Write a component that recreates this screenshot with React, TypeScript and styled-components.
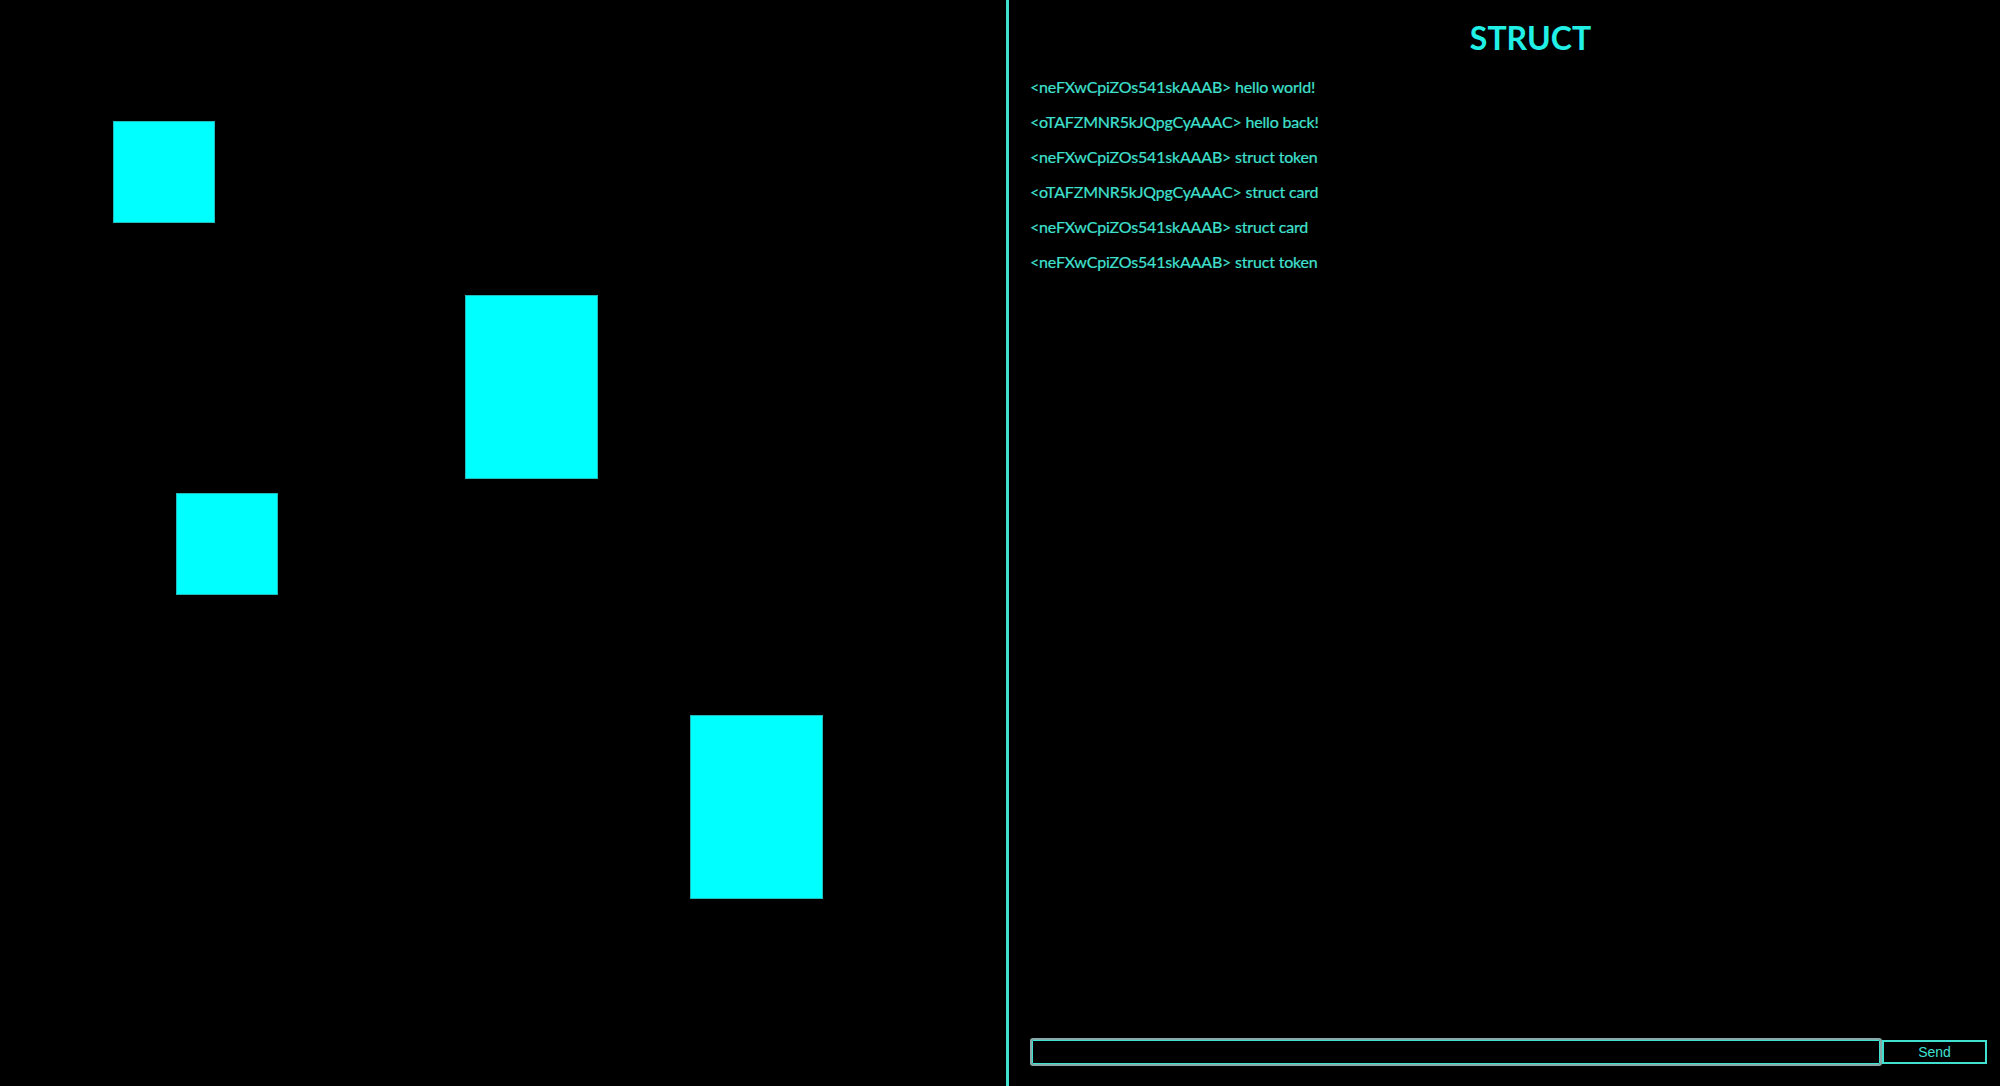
import React from "react";
import styled, { createGlobalStyle } from "styled-components";

const Global = createGlobalStyle`
  html, body { margin: 0; padding: 0; background: #000; }
  body { font-family: Lato, "Open Sans", sans-serif; }
  * { box-sizing: border-box; }
`;

const Page = styled.div`
  display: flex;
  height: 100vh;
  background: #000;
  overflow: hidden;
`;

const Board = styled.div`
  position: relative;
  flex: 0 0 1006px;
  height: 100%;
`;

const Divider = styled.div`
  flex: 0 0 3px;
  background: #40e0d0;
`;

const Piece = styled.div<{ $kind: "token" | "card" }>`
  position: absolute;
  width: ${(p) => (p.$kind === "token" ? "102px" : "133px")};
  height: ${(p) => (p.$kind === "token" ? "102px" : "184px")};
  background: #00ffff;
  border: 1px solid #20b8b8;
`;

const Chat = styled.div`
  flex: 1;
  display: flex;
  flex-direction: column;
  padding: 0 13px 20px 21px;
  min-width: 0;
`;

const Title = styled.h1`
  margin: 19px 0 20px;
  padding-left: 44px;
  text-align: center;
  font-family: Lato, "Open Sans", sans-serif;
  font-size: 32px;
  font-weight: 700;
  color: #20f0e6;
  line-height: 38px;
`;

const Log = styled.div`
  flex: 1;
  display: flex;
  flex-direction: column;
`;

const Line = styled.p`
  margin: 0 0 16px;
  font-size: 16px;
  line-height: 19px;
  letter-spacing: -0.18px;
  color: #40e0d0;
  -webkit-text-stroke: 0.2px #40e0d0;
`;

const Composer = styled.form`
  display: flex;
  align-items: center;
  height: 28px;
`;

const Field = styled.input`
  flex: 1;
  height: 28px;
  background: #000;
  border: 2px solid #86a9a9;
  box-shadow: inset 0 0 0 1px #40e0d0;
  border-radius: 3px;
  outline: none;
  color: #40e0d0;
  caret-color: #40e0d0;
  padding: 0 12px;
  font-size: 14px;
`;

const SendButton = styled.button`
  flex: 0 0 105px;
  height: 24px;
  background: #000;
  border: 2px solid #40e0d0;
  color: #40e0d0;
  font-family: "Liberation Sans", Arial, sans-serif;
  font-size: 14px;
  padding: 0;
  cursor: pointer;
`;

const pieces: { kind: "token" | "card"; x: number; y: number }[] = [
  { kind: "token", x: 113, y: 121 },
  { kind: "card", x: 465, y: 295 },
  { kind: "token", x: 176, y: 493 },
  { kind: "card", x: 690, y: 715 },
];

const messages = [
  "<neFXwCpiZOs541skAAAB> hello world!",
  "<oTAFZMNR5kJQpgCyAAAC> hello back!",
  "<neFXwCpiZOs541skAAAB> struct token",
  "<oTAFZMNR5kJQpgCyAAAC> struct card",
  "<neFXwCpiZOs541skAAAB> struct card",
  "<neFXwCpiZOs541skAAAB> struct token",
];

export default function App() {
  return (
    <Page>
      <Global />
      <Board>
        {pieces.map((p, i) => (
          <Piece key={i} $kind={p.kind} style={{ left: p.x, top: p.y }} />
        ))}
      </Board>
      <Divider />
      <Chat>
        <Title>STRUCT</Title>
        <Log>
          {messages.map((m, i) => (
            <Line key={i}>{m}</Line>
          ))}
        </Log>
        <Composer onSubmit={(e) => e.preventDefault()}>
          <Field autoFocus />
          <SendButton type="submit">Send</SendButton>
        </Composer>
      </Chat>
    </Page>
  );
}
